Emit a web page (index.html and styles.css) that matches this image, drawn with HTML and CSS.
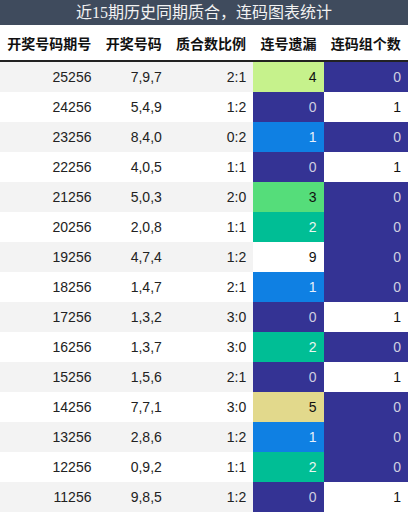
FILE: index.html
```html
<!DOCTYPE html>
<html lang="zh">
<head>
  <meta charset="UTF-8">
  <title>连码图表统计</title>
  <link rel="stylesheet" href="styles.css">
</head>
<body>
  <div class="title">近15期历史同期质合，连码图表统计</div>
  <table class="stats">
    <thead>
      <tr>
        <th>开奖号码期号</th>
        <th>开奖号码</th>
        <th>质合数比例</th>
        <th>连号遗漏</th>
        <th>连码组个数</th>
      </tr>
    </thead>
    <tbody>
      <tr><td>25256</td><td>7,9,7</td><td>2:1</td><td class="c4">4</td><td class="c0">0</td></tr>
      <tr><td>24256</td><td>5,4,9</td><td>1:2</td><td class="c0">0</td><td class="cw">1</td></tr>
      <tr><td>23256</td><td>8,4,0</td><td>0:2</td><td class="c1">1</td><td class="c0">0</td></tr>
      <tr><td>22256</td><td>4,0,5</td><td>1:1</td><td class="c0">0</td><td class="cw">1</td></tr>
      <tr><td>21256</td><td>5,0,3</td><td>2:0</td><td class="c3">3</td><td class="c0">0</td></tr>
      <tr><td>20256</td><td>2,0,8</td><td>1:1</td><td class="c2">2</td><td class="c0">0</td></tr>
      <tr><td>19256</td><td>4,7,4</td><td>1:2</td><td class="cw">9</td><td class="c0">0</td></tr>
      <tr><td>18256</td><td>1,4,7</td><td>2:1</td><td class="c1">1</td><td class="c0">0</td></tr>
      <tr><td>17256</td><td>1,3,2</td><td>3:0</td><td class="c0">0</td><td class="cw">1</td></tr>
      <tr><td>16256</td><td>1,3,7</td><td>3:0</td><td class="c2">2</td><td class="c0">0</td></tr>
      <tr><td>15256</td><td>1,5,6</td><td>2:1</td><td class="c0">0</td><td class="cw">1</td></tr>
      <tr><td>14256</td><td>7,7,1</td><td>3:0</td><td class="c5">5</td><td class="c0">0</td></tr>
      <tr><td>13256</td><td>2,8,6</td><td>1:2</td><td class="c1">1</td><td class="c0">0</td></tr>
      <tr><td>12256</td><td>0,9,2</td><td>1:1</td><td class="c2">2</td><td class="c0">0</td></tr>
      <tr><td>11256</td><td>9,8,5</td><td>1:2</td><td class="c0">0</td><td class="cw">1</td></tr>
    </tbody>
  </table>
</body>
</html>
```
FILE: styles.css
```css
body {
  margin: 0;
  padding: 0;
  background: #fff;
  font-family: "Liberation Sans", "Noto Sans CJK SC", sans-serif;
}
.title {
  background: #3f4b5d;
  color: #f2f2f2;
  height: 25px;
  line-height: 25px;
  text-align: center;
  font-size: 16px;
  font-family: "Liberation Serif", "Noto Sans CJK SC", serif;
}
.stats {
  width: 408px;
  border-collapse: collapse;
  font-size: 14px;
}
.stats th {
  height: 35px;
  padding: 0 7px;
  font-weight: bold;
  color: #111;
  text-align: center;
  white-space: nowrap;
  border-bottom: 2px solid #222;
}
.stats td {
  height: 30px;
  padding: 0 7px;
  text-align: right;
  color: #222;
}
.stats tbody tr:nth-child(odd) {
  background: #f3f3f3;
}
.stats tbody tr:nth-child(even) {
  background: #fff;
}
.stats td.c0 {
  background: #343394;
  color: #cfcfe0;
}
.stats td.c1 {
  background: #0f80e3;
  color: #e8f0fa;
}
.stats td.c2 {
  background: #00be95;
  color: #eaf7f2;
}
.stats td.c3 {
  background: #55dd7a;
  color: #111;
}
.stats td.c4 {
  background: #c6f28c;
  color: #111;
}
.stats td.c5 {
  background: #e2d98c;
  color: #111;
}
.stats td.cw {
  background: #fff;
  color: #111;
}
```
